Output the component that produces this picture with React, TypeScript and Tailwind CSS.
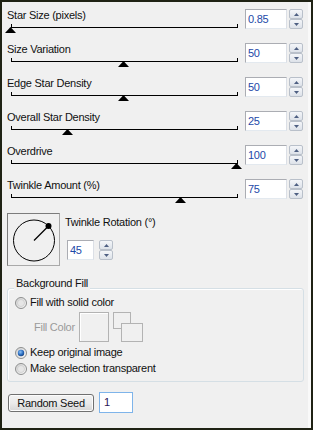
import React from 'react';

const rows = [
  { label: 'Star Size (pixels)', value: '0.85', pct: 0 },
  { label: 'Size Variation', value: '50', pct: 0.5 },
  { label: 'Edge Star Density', value: '50', pct: 0.5 },
  { label: 'Overall Star Density', value: '25', pct: 0.25 },
  { label: 'Overdrive', value: '100', pct: 1 },
  { label: 'Twinkle Amount (%)', value: '75', pct: 0.75 },
];

function Arrow({ up }: { up?: boolean }) {
  return (
    <svg width="5" height="3" viewBox="0 0 5 3">
      <polygon points={up ? '2.5,0 5,3 0,3' : '0,0 5,0 2.5,3'} fill="#4e5f82" />
    </svg>
  );
}

function Spinner() {
  return (
    <div className="flex flex-col w-[14px] h-[20px]">
      <div className="flex-1 flex items-center justify-center border border-[#b9c0ca] rounded-[2px] bg-gradient-to-b from-[#f4f6f9] to-[#dde2e9]">
        <Arrow up />
      </div>
      <div className="flex-1 flex items-center justify-center border border-[#b9c0ca] rounded-[2px] bg-gradient-to-b from-[#f4f6f9] to-[#dde2e9]">
        <Arrow />
      </div>
    </div>
  );
}

function NumBox({ value, className }: { value: string; className: string }) {
  return (
    <div className={`h-[20px] flex items-center pl-[2px] bg-white border border-[#abadb3] border-r-[#dbdfe6] border-b-[#e3e9ef] text-[#1d49a8] ${className}`}>
      {value}
    </div>
  );
}

function Radio({ checked }: { checked?: boolean }) {
  return (
    <svg width="12" height="12" viewBox="0 0 12 12">
      <defs>
        <linearGradient id="rg-ring" x1="0" y1="0" x2="1" y2="1">
          <stop offset="0" stopColor="#d0d0d0" />
          <stop offset="1" stopColor="#fafafa" />
        </linearGradient>
        <radialGradient id="rg-dot" cx="0.4" cy="0.35" r="0.7">
          <stop offset="0" stopColor="#8cc2f5" />
          <stop offset="0.6" stopColor="#2a6cc0" />
          <stop offset="1" stopColor="#163f7a" />
        </radialGradient>
      </defs>
      <circle cx="6" cy="6" r="5.5" fill="url(#rg-ring)" stroke="#8e8f8f" />
      {checked ? (
        <circle cx="6" cy="6" r="3.2" fill="url(#rg-dot)" />
      ) : (
        <circle cx="6" cy="6" r="3.5" fill="#e6e6e6" stroke="#c4c4c4" strokeWidth="0.6" />
      )}
    </svg>
  );
}

export default function App() {
  return (
    <div
      className="w-[313px] h-[430px] border-2 border-[#1f2214] bg-[#f0f0f0] text-[11px] leading-[13px] tracking-[-0.25px] text-[#111]"
      style={{ fontFamily: '"Liberation Sans", Arial, sans-serif' }}
    >
      <div className="h-full pt-[7px] pl-[5px] border-r-[3px] border-[#f9f9f9]">
        {/* sliders */}
        {rows.map((r) => (
          <div key={r.label} className="flex h-[34px]">
            <div className="w-[238px]">
              <div className="h-[13px]">{r.label}</div>
              <div className="relative ml-[4px] mt-[2px] h-[4px] w-[227px] border-x border-b border-black">
                <svg
                  className="absolute top-[3px]"
                  style={{ left: r.pct * 226 - 7 }}
                  width="11"
                  height="6"
                  viewBox="0 0 11 6"
                >
                  <polygon points="5.5,0 11,6 0,6" fill="#000" />
                </svg>
              </div>
            </div>
            <NumBox value={r.value} className="w-[42px]" />
            <div className="ml-[2px]">
              <Spinner />
            </div>
          </div>
        ))}

        {/* twinkle rotation */}
        <div className="flex">
          <div className="w-[53px] h-[53px] border border-[#7c7c7c] border-r-[#a9a9a9] border-b-[#a9a9a9]">
            <svg width="51" height="51" viewBox="0 0 51 51">
              <circle cx="26" cy="26.5" r="20.5" fill="none" stroke="#000" strokeWidth="1" />
              <line x1="26" y1="26.5" x2="40.5" y2="12" stroke="#000" strokeWidth="1.2" />
              <circle cx="40.5" cy="12" r="3" fill="#000" />
            </svg>
          </div>
          <div className="ml-[5px] pt-[3px]">
            <div>Twinkle Rotation (°)</div>
            <div className="flex ml-[2px] mt-[11px]">
              <NumBox value="45" className="w-[27px]" />
              <div className="ml-[5px]">
                <Spinner />
              </div>
            </div>
          </div>
        </div>

        {/* background fill group */}
        <div className="relative mt-[22px] w-[297px] h-[94px] border border-[#d5dfe5] rounded-[3px] shadow-[inset_1px_1px_0_#ffffff] pt-[7px] pl-[7px]">
          <span className="absolute left-[6px] -top-[12px] px-[2px] bg-[#f0f0f0]">Background Fill</span>
          <div className="flex items-center h-[13px] gap-[3px]">
            <Radio />
            <span>Fill with solid color</span>
          </div>
          <div className="flex items-center mt-[3px] ml-[19px] h-[30px]">
            <span className="w-[45px] text-[#9a9a9a]">Fill Color</span>
            <div className="w-[30px] h-[30px] border border-[#b3b3b3] shadow-[inset_1px_1px_0_#ffffff]" />
            <svg className="ml-[4px]" width="31" height="30" viewBox="0 0 31 30">
              <rect x="0.5" y="0.5" width="17" height="16" fill="#f0f0f0" stroke="#b3b3b3" />
              <rect x="8.5" y="11.5" width="21" height="18" fill="#f0f0f0" stroke="#b3b3b3" />
            </svg>
          </div>
          <div className="flex items-center h-[13px] gap-[3px] mt-[4px]">
            <Radio checked />
            <span>Keep original image</span>
          </div>
          <div className="flex items-center h-[13px] gap-[3px] mt-[3px]">
            <Radio />
            <span>Make selection transparent</span>
          </div>
        </div>

        {/* random seed */}
        <div className="flex items-start mt-[10px] ml-[1px]">
          <div className="mt-[2px] w-[86px] h-[18px] flex items-center justify-center border border-[#707070] rounded-[3px] bg-gradient-to-b from-[#f2f2f2] via-[#ebebeb] to-[#d6d6d6] shadow-[inset_0_0_0_1px_#fcfcfc]">
            Random Seed
          </div>
          <div className="ml-[5px] w-[34px] h-[21px] flex items-center pl-[4px] bg-white border border-[#7eb4ea] text-[#2b1457]">
            1
          </div>
        </div>
      </div>
    </div>
  );
}
